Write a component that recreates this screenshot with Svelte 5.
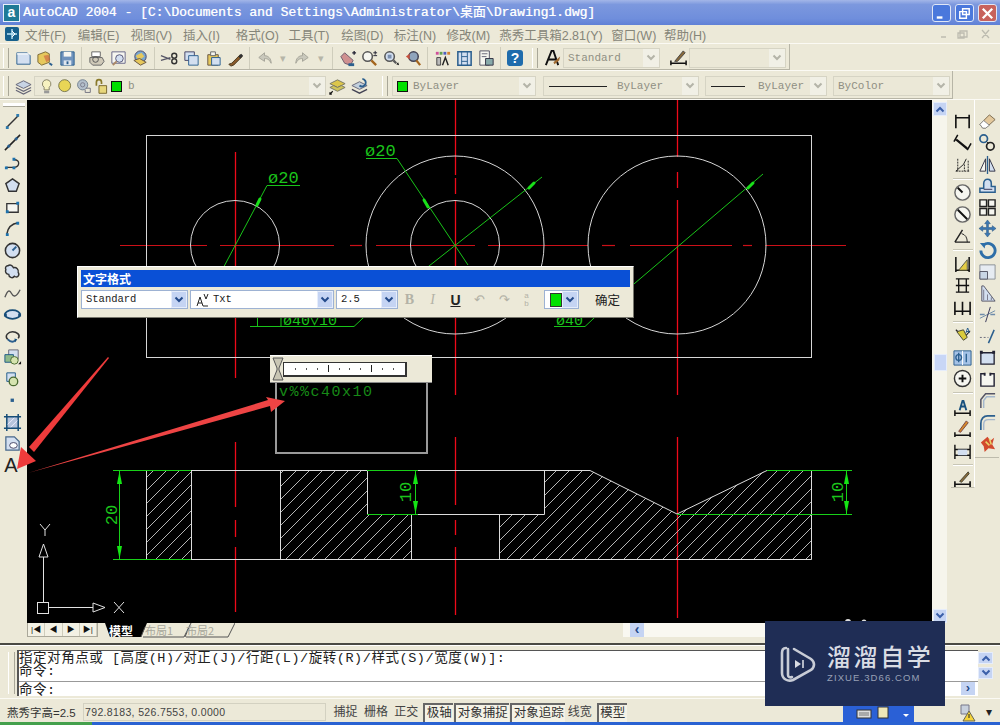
<script>
  const B = '#2b5f8e', L = '#d3dff0', Y = '#e6c85c', K = '#2a2a2a', R = '#c8503c', W = '#f6f6f0', G = '#8a8a80';
  const ic = {
    newdoc: `<path d="M3 4h11l3 3v9H3z" fill="${L}" stroke="${B}"/><path d="M3 4h14v2H3z" fill="#fff" opacity=".7"/>`,
    open: `<path d="M2 6l8-3 4 2v9l-8 3-4-3z" fill="${Y}" stroke="#7a6a3a"/><path d="M8 7l5-1 2 5-4 3z" fill="${R}" opacity=".55"/><path d="M14 15l3 2" stroke="${B}" stroke-width="2"/>`,
    save: `<path d="M3 3h14v14H3z" fill="#6f93bd" stroke="${B}"/><path d="M6 3h8v5H6z" fill="${W}"/><path d="M6 12h8v5H6z" fill="#dfe6ee"/><path d="M9 13h2v3H9z" fill="${B}"/>`,
    plot: `<path d="M5 3h9v5H5z" fill="#fff" stroke="#666"/><path d="M3 9h13l2 4-3 4H6l-3-3z" fill="#cfc9b8" stroke="#666"/><circle cx="9" cy="11" r="3" fill="none" stroke="#555"/>`,
    preview: `<path d="M3 3h14v12H3z" fill="${W}" stroke="#668"/><circle cx="11" cy="10" r="4" fill="${L}" stroke="#557"/><path d="M8 13l-4 4" stroke="#a86" stroke-width="2"/>`,
    publish: `<circle cx="10" cy="8" r="6" fill="#7aa7cf" stroke="#446"/><path d="M5 7l6-3 3 4-6 4z" fill="${Y}"/><path d="M3 12l7 5 6-3-7-4z" fill="${Y}" stroke="#654"/>`,
    cut: `<path d="M1 7l10 4M1 12l10-3" stroke="#556" stroke-width="1.4"/><circle cx="15" cy="7" r="2.6" fill="none" stroke="#333" stroke-width="1.5"/><circle cx="15" cy="13" r="2.6" fill="none" stroke="#333" stroke-width="1.5"/>`,
    copy: `<path d="M3 3h10v9H3z" fill="${L}" stroke="#446"/><path d="M7 7h10v10H7z" fill="${L}" stroke="${B}"/>`,
    paste: `<path d="M4 6h11v11H4z" rx="2" fill="${Y}" stroke="#654"/><path d="M7 3h5v4H7z" fill="${W}" stroke="#666"/><path d="M8 9h9v8H8z" fill="${L}" stroke="${B}"/>`,
    brush: `<path d="M3 16l3-1 9-9 2 2-9 9-3 1z" fill="#8a5a2a" stroke="#4a3a20"/><path d="M13 8l3-3 2 2-3 3z" fill="#333"/>`,
    undo: `<path d="M4 9l6-5v3c4 0 7 3 7 8-2-4-4-5-7-5v3z" fill="#c9c8bc" stroke="#a4a398"/>`,
    redo: `<path d="M16 9l-6-5v3C6 7 3 10 3 15c2-4 4-5 7-5v3z" fill="#c9c8bc" stroke="#a4a398"/>`,
    pan: `<path d="M3 8l4-4 9 8-3 5-6-2z" fill="#cf9090" stroke="#6a5a6a"/><path d="M15 4h4M17 2v4" stroke="#223" stroke-width="1.4"/><path d="M11 15h6v3h-6z" fill="${B}"/>`,
    zoomrt: `<circle cx="8" cy="8" r="5" fill="${W}" stroke="#555" stroke-width="1.6"/><path d="M12 12l5 5" stroke="#a4651e" stroke-width="2.4"/><path d="M14 4h4M16 2v4M14 7h4" stroke="#223"/>`,
    zoomwin: `<circle cx="8" cy="8" r="5" fill="${L}" stroke="#555" stroke-width="1.6"/><path d="M6 6h4v4H6z" fill="#7b8fae"/><path d="M12 12l3 3" stroke="#5a5a5a" stroke-width="2.4"/><path d="M15 16l3 1-1-3z" fill="#111"/>`,
    zoomprev: `<circle cx="10" cy="8" r="5" fill="#8fa4bc" stroke="#445" stroke-width="1.6"/><path d="M13 12l4 5" stroke="#a4651e" stroke-width="2.4"/><path d="M2 8l4-3v6z" fill="${R}"/>`,
    props: `<path d="M3 3h3v3H3z" fill="#d0509a"/><path d="M7 3h3v3H7z" fill="#60a050"/><path d="M11 3h3v3h-3z" fill="#5060c0"/><path d="M15 3h3v3h-3z" fill="#d08030"/><path d="M4 9h4v8H4z" fill="#bbb" stroke="#444"/><path d="M10 17l3-8 3 8" fill="none" stroke="#222" stroke-width="1.5"/>`,
    design: `<path d="M3 3h14v14H3z" fill="${L}" stroke="${B}" stroke-width="1.6"/><path d="M7 3v14M13 3v14M7 8h6M7 13h6" stroke="${B}"/>`,
    palette: `<path d="M3 2h10v15H3z" fill="${W}" stroke="#556"/><path d="M5 5h6M5 8h5" stroke="#667"/><path d="M9 10h8v7H9z" fill="#8aa" stroke="#334"/>`,
    help: `<path d="M2 3h16v15H2z" rx="3" fill="#2f6ca8" stroke="#1e4a78"/>`,
    txt: `<path d="M3 17L9 2h2l5 15M5 11h9" fill="none" stroke="#111" stroke-width="2"/><path d="M11 14l7-6-1 4-5 4z" fill="#a06a30"/>`,
    dimst: `<path d="M2 12v5M18 12v5M2 15h16" stroke="#111" stroke-width="1.6"/><path d="M6 13L15 2l2 2-8 9z" fill="#8a6a3a" stroke="#444"/>`,
    layers: `<path d="M10 4l8 4-8 4-8-4z" fill="#c8d4e4" stroke="#667"/><path d="M2 11l8 4 8-4M2 14l8 4 8-4" fill="none" stroke="#667" stroke-width="1.3"/>`,
    bulb: `<path d="M9 2a5 5 0 0 1 3 9v3H6v-3a5 5 0 0 1 3-9z" fill="#f7f2c0" stroke="#77745a"/><path d="M6 15h6v3H6z" fill="#999"/>`,
    sun: `<circle cx="9" cy="9" r="7" fill="#e8d556" stroke="#6a6a40"/>`,
    freeze: `<circle cx="9" cy="8" r="6" fill="#b3bfcb" stroke="#6a7a8a"/><circle cx="9" cy="8" r="2.5" fill="none" stroke="#778"/><path d="M13 12h5v5h-6v-3" fill="none" stroke="#667"/>`,
    lock: `<path d="M4 9V5a3 3 0 0 1 6 0v2" fill="none" stroke="#8a7a2a" stroke-width="2"/><path d="M7 9h9v9H7z" fill="#e7d77c" stroke="#6a5a20"/>`,
    layer2: `<path d="M10 3l8 4-8 4-8-4z" fill="#dcc64a" stroke="#776"/><path d="M2 11l8 4 8-4-4-2-4 2-4-2z" fill="#cfc45a" stroke="#776"/><path d="M2 18l3-3M2 16v2h2" stroke="#111" stroke-width="1.2" fill="none"/>`,
    layer3: `<path d="M10 5l8 4-8 4-8-4z" fill="#c3d0dd" stroke="#667"/><path d="M2 13l8 4 8-4" fill="none" stroke="#445" stroke-width="1.5"/><path d="M13 2a4 4 0 1 1-3 7" fill="none" stroke="${B}" stroke-width="2"/>`,
    line: `<path d="M4 16L16 4" stroke="#333" stroke-width="1.5"/><path d="M3 15h3v3H3zM14 2h3v3h-3z" fill="#2b7ab0"/>`,
    xline: `<path d="M2 18L18 2" stroke="#222" stroke-width="1.6"/><path d="M5 13l2 2M13 5l2 2" stroke="${B}" stroke-width="3"/>`,
    pline: `<path d="M3 13h9M12 13c6-1 6-8 0-8" fill="none" stroke="#333" stroke-width="1.4"/><path d="M2 12h3v3H2zM10 12h3v3h-3zM10 3h3v3h-3z" fill="#1d72ad"/>`,
    poly: `<path d="M10 3l7 5-3 8H6L3 8z" fill="${L}" stroke="#333" stroke-width="1.5"/>`,
    rect: `<path d="M4 6h12v9H4z" fill="${W}" stroke="#333" stroke-width="1.4"/><path d="M3 13h3v3H3zM14 4h3v3h-3z" fill="#1d72ad"/>`,
    arc: `<path d="M4 16C5 9 9 5 16 4" fill="none" stroke="#333" stroke-width="1.6"/><path d="M3 15h3v3H3zM14 3h3v3h-3z" fill="#1d72ad"/>`,
    circle: `<circle cx="10" cy="10" r="7.5" fill="${L}" stroke="#333" stroke-width="1.6"/><path d="M10 10l4-4" stroke="${B}" stroke-width="2"/>`,
    cloud: `<path d="M5 4c3-2 5 0 6 2 3-1 6 2 5 5 2 3-1 6-4 4-2 3-6 1-6-2-3 0-4-3-3-5-1-2 0-4 2-4z" fill="${L}" stroke="#333" stroke-width="1.5"/>`,
    spline: `<path d="M2 14c3-8 5-8 7-4s5 4 9-4" fill="none" stroke="#555" stroke-width="1.4"/>`,
    ellipse: `<ellipse cx="10" cy="10" rx="8" ry="4.5" fill="${L}" stroke="#174d78" stroke-width="1.8"/><path d="M1 9h3v3H1zM16 9h3v3h-3z" fill="#174d78"/>`,
    earc: `<path d="M5 13C1 9 6 5 10 5s9 3 6 7" fill="none" stroke="#333" stroke-width="1.6"/><path d="M5 13c3 3 6 3 8 1" fill="none" stroke="${B}" stroke-width="2"/><path d="M12 12l3 1-2 3z" fill="#174d78"/>`,
    insert: `<path d="M6 2h10v10H6z" fill="${L}" stroke="#667"/><path d="M2 7h9v8H2z" fill="#8fb98a" stroke="#1d5a88"/><circle cx="12" cy="13" r="4" fill="#d6e4b0" stroke="#4a6a30"/><path d="M16 17l3-3v3z" fill="#111"/>`,
    block: `<path d="M4 3h9v9H4z" fill="${L}" stroke="#1d5a88"/><circle cx="11" cy="12" r="4.5" fill="#d6e4b0" stroke="#4a6a30" stroke-width="1.4"/>`,
    point: `<rect x="8" y="8" width="3.5" height="3.5" fill="${B}"/>`,
    hatch: `<path d="M4 4h12v12H4z" fill="#b7c4dc"/><path d="M4 1v18M16 1v18M1 4h18M1 16h18" stroke="#174d78" stroke-width="1.6"/><path d="M5 12l7-7M8 15l7-7" stroke="#eef" />`,
    region: `<path d="M3 3h9l5 5v9H3z" fill="${L}" stroke="#48688a" stroke-width="1.3"/><ellipse cx="11" cy="12" rx="4" ry="3" fill="#fff" stroke="#446"/>`,
    dlin: `<path d="M3 3v14M17 3v14M3 6h14" stroke="#111" stroke-width="1.7"/>`,
    dali: `<path d="M3 7l12 10M5 2L1 9M19 11l-4 7M4 7l11 9" stroke="#111" stroke-width="1.6"/>`,
    dord: `<path d="M3 17h14M5 4v13M12 10v7M16 6v11" stroke="#222" stroke-width="1" stroke-dasharray="2 1"/><path d="M3 17l8-7 3-6" fill="none" stroke="#222"/>`,
    drad: `<circle cx="10" cy="10" r="8" fill="${W}" stroke="#666" stroke-width="1.5"/><path d="M10 10L5 5" stroke="#111" stroke-width="2"/>`,
    ddia: `<circle cx="10" cy="10" r="8" fill="${W}" stroke="#666" stroke-width="1.5"/><path d="M5 5l10 10" stroke="#111" stroke-width="2"/>`,
    dang: `<path d="M2 17h16M2 17L10 4" stroke="#222" stroke-width="1.5"/><path d="M9 8c4 1 6 4 6 9" fill="none" stroke="#222"/>`,
    dqk: `<path d="M3 2v16M17 2v16M3 16h14" stroke="#111" stroke-width="1.6"/><path d="M6 16l9-11v11z" fill="#e4cc44" stroke="#554"/>`,
    dbase: `<path d="M3 3h14M3 10h14M3 17h14M6 3v14M14 3v14" stroke="#111" stroke-width="1.4"/>`,
    dcont: `<path d="M2 4v14M10 4v14M18 4v14M2 14h16" stroke="#111" stroke-width="1.7"/>`,
    dlead: `<path d="M3 4l9 8 6-7" fill="none" stroke="#222" stroke-width="1.2"/><path d="M4 6l7-2 4 8-4 3z" fill="#d9cb3c" stroke="#443"/><text x="13" y="7" font-size="7" font-weight="700" fill="${B}" font-family="Liberation Sans">A</text>`,
    dtol: `<path d="M1 3h18v15H1z" fill="#a4c2e6" stroke="${B}"/><path d="M10 3v15" stroke="#fff"/><circle cx="6" cy="10" r="3" fill="none" stroke="${B}" stroke-width="1.4"/><path d="M6 5v10M14 6v9" stroke="${B}" stroke-width="1.4"/>`,
    dcen: `<circle cx="10" cy="10" r="8.5" fill="${W}" stroke="#333" stroke-width="1.5"/><path d="M10 6v8M6 10h8" stroke="#111" stroke-width="2"/>`,
    dedit: `<path d="M2 13v6M18 13v6M2 16h16" stroke="#111" stroke-width="1.6"/><path d="M7 13l3-10h1l3 10M8 9h5" stroke="#18507e" fill="none" stroke-width="2"/>`,
    dtedit: `<path d="M2 14v5M18 14v5M2 17h16" stroke="#111" stroke-width="1.6"/><path d="M6 13L14 2l2 2-8 10z" fill="#d68a2a" stroke="#744"/>`,
    dupd: `<path d="M2 4v15M18 4v15M2 9h16M2 15h16" stroke="#111" stroke-width="1.5"/><path d="M5 9h10v6H5z" fill="${L}"/>`,
    dstyle: `<path d="M2 13v6M18 13v6M2 16h16" stroke="#111" stroke-width="1.7"/><path d="M7 13L16 3l1 2-8 9z" fill="#8a6a3a" stroke="#443"/>`,
    erase: `<path d="M2 13l10-10 6 5-10 9H5z" fill="#e3c89c" stroke="#7a6a50"/><path d="M2 13l4-4 6 5-4 3H5z" fill="#fff" stroke="#888"/>`,
    copyo: `<circle cx="6" cy="6" r="4" fill="none" stroke="${B}" stroke-width="1.8"/><circle cx="13" cy="14" r="4" fill="none" stroke="#222" stroke-width="1.8"/><path d="M9 9l2 2" stroke="#222"/>`,
    mirror: `<path d="M2 17L8 4v13z" fill="${W}" stroke="#334"/><path d="M18 17L12 4v13z" fill="${L}" stroke="#334"/><path d="M10 1v19" stroke="${B}" stroke-width="1.4"/>`,
    offset: `<path d="M2 17v-4h4V8c0-6 8-6 8 0v3h4v6z" fill="${L}" stroke="${B}" stroke-width="1.6"/><path d="M6 14h9" stroke="#335"/>`,
    array: `<path d="M2 2h7v7H2zM11 2h7v7h-7zM2 11h7v7H2zM11 11h7v7h-7z" fill="${W}" stroke="#222" stroke-width="1.5"/>`,
    move: `<path d="M10 1l3 4h-2v4h4V7l4 3-4 3v-2h-4v4h2l-3 4-3-4h2v-4H5v2l-4-3 4-3v2h4V5H7z" fill="#3c78b4" stroke="#1d4a78" stroke-width=".5"/>`,
    rotate: `<path d="M6 4a7.5 7.5 0 1 1-3 6" fill="none" stroke="#2e6ea8" stroke-width="3"/><path d="M2 2l6 0-1 6z" fill="#2e6ea8"/>`,
    scale: `<path d="M2 3h16v15H2z" fill="#e6ebf2" stroke="#8a8f96"/><path d="M2 10h8v8H2z" fill="#c9d6e6" stroke="#556"/>`,
    stretch: `<path d="M4 2v16h14L6 2z" fill="${L}" stroke="#556"/><path d="M6 6v11M10 11v6M14 14v3" stroke="#778"/>`,
    trim: `<path d="M2 14l16-8" stroke="#6e8caa"/><path d="M2 10h5M13 10h5" stroke="#6e8caa" stroke-width="1.5"/><path d="M13 2L8 18" stroke="#335" stroke-width="1"/>`,
    extend: `<path d="M2 11h9" stroke="#667" stroke-dasharray="2 2"/><path d="M11 17L17 3" stroke="${B}" stroke-width="1.6"/>`,
    brk: `<path d="M3 5h14v12H3z" fill="${L}" stroke="#223" stroke-width="1.4"/><path d="M2 3h3v3H2zM15 3h3v3h-3z" fill="#223"/>`,
    brk2: `<path d="M7 4H3v13h14V4h-4" fill="${W}" stroke="#223" stroke-width="1.5"/><path d="M6 3h2v3H6zM12 3h2v3h-2z" fill="#223"/>`,
    cham: `<path d="M18 3H8L3 9v9" fill="none" stroke="#556" stroke-width="1.6"/><path d="M18 6H9L6 10v8" fill="none" stroke="#a4b7cc" stroke-width="1.5"/>`,
    fillet: `<path d="M18 3H10C6 3 3 6 3 11v7" fill="none" stroke="${B}" stroke-width="1.8"/><path d="M18 7h-7c-3 0-5 2-5 5v6" fill="none" stroke="#a4b7cc" stroke-width="1.5"/>`,
    explode: `<path d="M3 9l7-6 3 4 4-3-2 7 3 5-7-1-4 4-1-6z" fill="#d24a2e"/><path d="M8 8l4 4M12 5l2 6" stroke="#e9d36a" stroke-width="1.6"/>`
  };

  const row1a = ['newdoc','open','save','|','plot','preview','publish','|','cut','copy','paste','brush','|','undo','v','redo','v','|','pan','zoomrt','zoomwin','zoomprev','|','props','design','palette','|'];
  const left = ['line','xline','pline','poly','rect','arc','circle','cloud','spline','ellipse','earc','insert','block','point','hatch','region'];
  const dims = [['dlin','dali','dord'],['drad','ddia','dang'],['dqk','dbase','dcont'],['dlead','dtol','dcen'],['dedit','dtedit','dupd'],['dstyle']];
  const modify = ['erase','copyo','mirror','offset','array','move','rotate','scale','stretch','trim','extend','brk','brk2','cham','fillet','explode'];
  const menus = ['文件(F)','编辑(E)','视图(V)','插入(I)','格式(O)','工具(T)','绘图(D)','标注(N)','修改(M)','燕秀工具箱2.81(Y)','窗口(W)','帮助(H)'];
  const modes = [['捕捉',0],['栅格',0],['正交',0],['极轴',1],['对象捕捉',1],['对象追踪',1],['线宽',0],['模型',1]];

  const redH = [[120,207],[220,334],[350,362],[376,475],[488,588],[602,615],[630,732],[743,752],[765,846]];
  const redV = [
    [235,152,378],[235,442,507],[235,520,537],[235,547,612],
    [455,100,175],[455,178,194],[455,200,395],[455,437,505],[455,520,535],[455,547,615],
    [677,100,157],[677,172,188],[677,200,395],[677,437,618]
  ];
  const ticks = [0,1,2,3,4,5,6,7,8,9];
</script>

{#snippet chev(color)}
  <svg class="chev" viewBox="0 0 10 8"><path d="M1.5 1.5L5 5l3.5-3.5" fill="none" stroke={color} stroke-width="2"/></svg>
{/snippet}

{#snippet icon(name)}
  <span class="btn"><svg class="ico" viewBox="0 0 20 20">{@html ic[name]}</svg></span>
{/snippet}

<div class="app">
  <header class="title">
    <span class="appicon">a</span>
    <span class="title-text">AutoCAD 2004 - [C:\Documents and Settings\Administrator\桌面\Drawing1.dwg]</span>
    <span class="winbtns">
      <span class="wb"><svg viewBox="0 0 18 18"><path d="M4 12h6v2.5H4z" fill="#fff"/></svg></span>
      <span class="wb"><svg viewBox="0 0 18 18"><path d="M7 4h7v6H7zM4 7h7v7H4z" fill="none" stroke="#fff" stroke-width="1.5"/></svg></span>
      <span class="wb close"><svg viewBox="0 0 18 18"><path d="M4 4l10 10M14 4L4 14" stroke="#fff" stroke-width="2.4"/></svg></span>
    </span>
  </header>

  <nav class="menubar">
    <svg class="docicon" viewBox="0 0 16 16"><rect x="1" y="1" width="14" height="14" rx="2" fill="#16608c"/><path d="M8 3v10M3 8h10" stroke="#bfe6f8" stroke-width="1.4"/><path d="M8 5l3 3-3 3" fill="none" stroke="#fff"/></svg>
    {#each menus as m, i}<span class="menu" class:wide={i === 9}>{m}</span>{/each}
    <span class="mdi">
      <svg viewBox="0 0 60 12"><path d="M3 9h5M22 3h7v6h-7zM20 5h6v5h-6zM44 2l7 8M51 2l-7 8" fill="none" stroke="#bdbcb0" stroke-width="1.3"/></svg>
    </span>
  </nav>

  <div class="row row1">
    <div class="bar bar-a">
      <span class="grip"></span>
      {#each row1a as it}
        {#if it === '|'}<span class="sep"></span>
        {:else if it === 'v'}<span class="drop">▾</span>
        {:else}{@render icon(it)}{/if}
      {/each}
      <span class="btn help">?</span>
      <span class="grip g2"></span>
      {@render icon('txt')}
      <span class="combo flat w96"><span class="ctext">Standard</span><span class="carrow">{@render chev('#b4b4a8')}</span></span>
      <span class="gap7"></span>
      {@render icon('dimst')}
      <span class="combo flat w97"><span class="ctext"></span><span class="carrow">{@render chev('#b4b4a8')}</span></span>
    </div>
  </div>

  <div class="row row2">
    <div class="bar bar-b">
      <span class="grip"></span>
      {@render icon('layers')}
      <span class="combo flat w292">
        <span class="ctext layer">
          <svg class="mini" viewBox="0 0 20 20">{@html ic.bulb}</svg>
          <svg class="mini" viewBox="0 0 20 20">{@html ic.sun}</svg>
          <svg class="mini" viewBox="0 0 20 20">{@html ic.freeze}</svg>
          <svg class="mini" viewBox="0 0 20 20">{@html ic.lock}</svg>
          <i class="swatch"></i><span class="layername">b</span>
        </span>
        <span class="carrow">{@render chev('#b4b4a8')}</span>
      </span>
      {@render icon('layer2')}
      {@render icon('layer3')}
      <span class="grip g3"></span>
      <span class="combo flat w144"><span class="ctext"><i class="swatch"></i>ByLayer</span><span class="carrow">{@render chev('#b4b4a8')}</span></span>
      <span class="combo flat w156 ml7"><span class="ctext"><i class="lt long"></i>ByLayer</span><span class="carrow">{@render chev('#b4b4a8')}</span></span>
      <span class="combo flat w122 ml6"><span class="ctext"><i class="lt"></i>ByLayer</span><span class="carrow">{@render chev('#b4b4a8')}</span></span>
      <span class="combo flat w117 ml6"><span class="ctext">ByColor</span><span class="carrow">{@render chev('#b4b4a8')}</span></span>
    </div>
  </div>

  <main class="main">
    <aside class="lefttools">
      <span class="hgrip"></span>
      {#each left as n}{@render icon(n)}{/each}
      <span class="btn letter">A</span>
    </aside>

    <div class="center">
      <div class="canvasrow">
        <svg class="canvas" viewBox="27 100 905 523" width="905" height="523">
          <defs>
            <pattern id="hatch" patternUnits="userSpaceOnUse" width="13" height="13">
              <path d="M-1 14L14 -1M-1 1L1 -1M12 14L14 12" stroke="#b4b4b4" stroke-width="1"/>
            </pattern>
          </defs>
          <rect x="27" y="100" width="905" height="523" fill="#000"/>

          {#each redH as s}<line x1={s[0]} x2={s[1]} y1="245.5" y2="245.5" stroke="#cc1018" stroke-width="1.2"/>{/each}
          {#each redV as s}<line x1={s[0] + .5} x2={s[0] + .5} y1={s[1]} y2={s[2]} stroke="#ee0a1a" stroke-width="1.3"/>{/each}

          <g fill="none" stroke="#d6d6d6" stroke-width="1">
            <rect x="146.5" y="135.5" width="665" height="222"/>
            <circle cx="235" cy="245" r="44.5"/>
            <circle cx="455" cy="245" r="89"/>
            <circle cx="455" cy="245" r="44.5"/>
            <circle cx="677" cy="245" r="89"/>
          </g>

          <g stroke="#19c419" stroke-width="1" fill="none">
            <path d="M300 185.5H267L211 291"/>
            <path d="M366 158.5H397L468 265"/>
            <path d="M363 318L542 177"/>
            <path d="M594 318L763 174"/>
            <path d="M250 326.5H354L363 318"/>
            <path d="M554 326.5H585L594 318"/>
            <path d="M257.5 318V326M281 318V326"/>
          </g>
          <g stroke="#19e019" stroke-width="3" stroke-linecap="round">
            <line x1="260" y1="199" x2="257" y2="205"/>
            <line x1="424" y1="200" x2="428" y2="207"/>
            <line x1="534" y1="183" x2="529" y2="188"/>
            <line x1="753" y1="183" x2="748" y2="188"/>
          </g>
          <g class="dim">
            <text x="268" y="183">ø20</text>
            <text x="365" y="156">ø20</text>
            <text x="283" y="325" class="cut">ø40▽10</text>
            <text x="556" y="325" class="cut">ø40</text>
          </g>

          <!-- section view -->
          <rect x="146" y="470" width="45" height="89" fill="url(#hatch)"/>
          <polygon points="280,470 367,470 367,514 411,514 411,559 280,559" fill="url(#hatch)"/>
          <polygon points="544,470 590,470 677,514 767,470 811,470 811,559 499,559 499,514 544,514" fill="url(#hatch)"/>
          <g fill="none" stroke="#dcdcdc" stroke-width="1">
            <path d="M191 470.5H590L677 514L767 470.5"/>
            <path d="M191 559.5H499"/>
            <path d="M146.5 470V559M191.5 470V559M280.5 470V559M367.5 470V514.5H544.5V470M411.5 514V559M499.5 514V559"/>
            <path d="M499 559.5H811.5V470"/>
          </g>
          <g stroke="#18d018" stroke-width="1" fill="none">
            <path d="M113 470.5H191M113 559.5H191M119.5 471V559"/>
            <path d="M367 470.5H418M367 514.5H418M415.5 471V514"/>
            <path d="M767 470.5H852M677 514.5H852M846.5 471V514"/>
          </g>
          <g fill="#14e614">
            <polygon points="119.5,471 117,484 122,484"/><polygon points="119.5,559 117,546 122,546"/>
            <polygon points="415.5,471 413,484 418,484"/><polygon points="415.5,514 413,501 418,501"/>
            <polygon points="846.5,471 844,484 849,484"/><polygon points="846.5,514 844,501 849,501"/>
          </g>
          <g class="dim">
            <text transform="translate(117 515) rotate(-90)" text-anchor="middle">20</text>
            <text transform="translate(411 492) rotate(-90)" text-anchor="middle">10</text>
            <text transform="translate(843 492) rotate(-90)" text-anchor="middle">10</text>
          </g>

          <!-- ucs icon -->
          <g fill="none" stroke="#e2e2e2" stroke-width="1">
            <rect x="37.5" y="602.5" width="11" height="11"/>
            <path d="M48 607.5H93M43.5 602V557"/>
            <path d="M93 603L105 607.5L93 612zM43.5 544L39 557H48z"/>
            <path d="M114 602L124 613M124 602L114 613M40 524L45 530L50 524M45 530V536"/>
          </g>
          <circle cx="848" cy="622" r="3" fill="#dedede"/><circle cx="864" cy="622" r="2.5" fill="#dedede"/>
        </svg>

        <div class="vscroll">
          <span class="sbtn">{@render chev('#3a5fa8')}</span>
          <span class="vthumb"></span>
          <span class="sbtn">{@render chev('#3a5fa8')}</span>
        </div>
      </div>

      <div class="tabrow">
        <div class="navs">
          <span class="nav">|◀</span><span class="nav">◀</span><span class="nav">▶</span><span class="nav">▶|</span>
        </div>
        <div class="tabs">
          <svg class="tabshapes" viewBox="0 0 130 15" width="130" height="15">
            <path d="M0 0H36L42 0L36 14H5z" fill="#000"/>
            <path d="M38 14H79L86 0" fill="none" stroke="#555"/>
            <path d="M81 14H123L130 0" fill="none" stroke="#555"/>
            <path d="M36 14L40 4M80 14L84 4" stroke="#555"/>
          </svg>
          <span class="tab on">模型</span><span class="tab">布局1</span><span class="tab">布局2</span>
        </div>
        <div class="hscroll"><span class="harrow">‹</span></div>
      </div>
    </div>

    <div class="righttools">
      <div class="dimcol">
        <span class="hgrip"></span>
        {#each dims as grp, i}
          {#if i > 0}<span class="hsep"></span>{/if}
          {#each grp as n}{@render icon(n)}{/each}
        {/each}
      </div>
      <div class="modcol">
        <span class="hgrip"></span>
        {#each modify as n}{@render icon(n)}{/each}
      </div>
    </div>
  </main>

  <section class="cmd">
    <span class="vgrip"></span>
    <div class="cmdbox">
      <div class="hist">指定对角点或 [高度(H)/对正(J)/行距(L)/旋转(R)/样式(S)/宽度(W)]:<br/>命令:</div>
      <div class="input">命令:</div>
      <span class="cright">›</span>
    </div>
    <div class="cmdscroll">
      <span class="csb">{@render chev('#3a5fa8')}</span>
      <span class="csb">{@render chev('#3a5fa8')}</span>
    </div>
  </section>

  <footer class="status">
    <span class="tip">燕秀字高=2.5</span>
    <span class="coords">792.8183, 526.7553, 0.0000</span>
    <span class="modes">
      {#each modes as m}<span class="mode" class:on={m[1]}>{m[0]}</span>{/each}
    </span>
    <span class="tray">
      <svg viewBox="0 0 70 16" width="70" height="16"><rect x="14" y="4" width="14" height="8" fill="#ddd" stroke="#333"/><path d="M16 7h10M16 9h10" stroke="#777"/><rect x="35" y="1" width="10" height="11" fill="#eee7b8" stroke="#333"/><path d="M60 8h6l-3 3z" fill="#fff"/></svg>
    </span>
    <span class="warn">
      <svg viewBox="0 0 20 20" width="20" height="20"><path d="M3 3h8v9H3z" fill="#c8d0dc" stroke="#778"/><path d="M11 9l6 10H5z" fill="#f5d33a" stroke="#665"/><path d="M11 12v4" stroke="#222"/></svg>
    </span>
    <span class="caret">▾</span>
  </footer>

  <div class="taskbar"><span class="start"></span></div>

  <!-- floating stuff over the drawing -->
  <div class="textwin">
    <div class="tw-title">文字格式</div>
    <div class="tw-body">
      <span class="combo white tw1"><span class="ctext">Standard</span><span class="carrow blue">{@render chev('#234a8a')}</span></span>
      <span class="combo white tw2"><span class="ctext"><svg class="fonticon" viewBox="0 0 14 14"><path d="M2 13l3-9 3 9M3 10h4M9 1l2 5 2-5M8 13h5" fill="none" stroke="#222"/></svg> Txt</span><span class="carrow blue">{@render chev('#234a8a')}</span></span>
      <span class="combo white tw3"><span class="ctext">2.5</span><span class="carrow blue">{@render chev('#234a8a')}</span></span>
      <span class="fmt bold">B</span>
      <span class="fmt ital">I</span>
      <span class="fmt under">U</span>
      <span class="fmt small">↶</span>
      <span class="fmt small">↷</span>
      <span class="fmt frac">a<br/>b</span>
      <span class="combo white tw4"><span class="ctext"><i class="bigswatch"></i></span><span class="carrow blue">{@render chev('#234a8a')}</span></span>
      <span class="ok">确定</span>
    </div>
  </div>

  <div class="rulerwin">
    <div class="rulerbar">
      <svg class="hglass" viewBox="0 0 12 24"><path d="M1 1h10L7 11v2l4 10H1l4-10v-2z" fill="#c9c6b4" stroke="#555"/></svg>
      <div class="ruler">
        {#each ticks as t}<i class:big={t === 3 || t === 7}></i>{/each}
      </div>
    </div>
    <div class="editbox">v%%c40x10</div>
  </div>

  <svg class="arrows" viewBox="0 0 1000 725" width="1000" height="725">
    <polygon points="108,357 109,358 34,452 29,447" fill="#ee3b3b"/>
    <polygon points="21,447 36,461 17,469" fill="#ee3b3b"/>
    <polygon points="28,473 268,400 266,397 285,401 271,412 270,406" fill="#ee4444"/>
  </svg>

  <div class="logo">
    <svg class="logomark" viewBox="0 0 36 40" width="36" height="40">
      <path d="M6 4c-3 0-4 2-4 5v20c0 6 6 9 11 7l18-10c4-3 4-8 0-11L14 5" fill="none" stroke="#c8ccd6" stroke-width="2.6" stroke-linecap="round"/>
      <path d="M8 5v26c0 2 2 3 4 2" fill="none" stroke="#c8ccd6" stroke-width="2.6" stroke-linecap="round"/>
      <path d="M15 16l6 4-6 4z" fill="#d8dbe3"/><path d="M23 16v8" stroke="#d8dbe3" stroke-width="1.6"/>
    </svg>
    <div class="logotext">
      <div class="cn">溜溜自学</div>
      <div class="en">ZIXUE.3D66.COM</div>
    </div>
  </div>
</div>

<style>
  :global(body) { margin: 0; background: #ece9d8; }
  .app {
    position: relative;
    width: 1000px;
    height: 725px;
    overflow: hidden;
    background: #ece9d8;
    display: flex;
    flex-direction: column;
    font-family: "Liberation Sans", "Noto Sans CJK SC", sans-serif;
  }
  .title {
    height: 25px;
    flex: none;
    display: flex;
    align-items: center;
    background: linear-gradient(#a3b6e8, #7c98de 18%, #6f8edc 75%, #5f80d6);
    padding: 0 3px;
    box-sizing: border-box;
  }
  .appicon {
    width: 15px; height: 16px;
    background: #1f7a96;
    border: 1px solid #e8f0fa;
    color: #fff;
    font: bold 14px/14px "Liberation Sans", sans-serif;
    text-align: center;
  }
  .title-text {
    margin-left: 3px;
    color: #fff;
    font: 13px/1 "Liberation Mono", "Noto Sans CJK SC", monospace;
    text-shadow: .5px 0 0 #ffffffb0;
    white-space: nowrap;
  }
  .winbtns { margin-left: auto; display: flex; gap: 4px; margin-right: 0; }
  .wb { width: 19px; height: 18px; border-radius: 3px; background: #4a78dc; border: 1px solid #dfe6f6; box-sizing: border-box; }
  .wb svg { display: block; }
  .wb.close { background: #c8625c; }

  .menubar {
    height: 19px;
    flex: none;
    display: flex;
    align-items: center;
    padding-left: 4px;
    box-sizing: border-box;
    border-bottom: 1px solid #fbfaf4;
  }
  .docicon { width: 16px; height: 16px; margin-right: 5px; flex: none; }
  .menu {
    color: #858579;
    font-size: 12.5px;
    white-space: nowrap;
    flex: 0 0 52.7px;
  }
  .menu.wide { flex-basis: 112px; }
  .mdi { margin-left: auto; margin-right: 2px; }
  .mdi svg { display: block; width: 60px; height: 12px; }

  .row { flex: none; display: flex; border-bottom: 1px solid #fbfaf4; box-sizing: border-box; }
  .row1 { height: 27px; }
  .row2 { height: 29px; }
  .bar {
    display: flex;
    align-items: center;
    box-sizing: border-box;
    border-bottom: 1px solid #b7b5a6;
    border-right: 1px solid #b7b5a6;
    height: 100%;
    padding-top: 3px;
  }
  .bar-a { width: 790px; }
  .bar-b { width: 953px; }
  .grip {
    flex: none;
    width: 4px;
    height: 20px;
    margin: 0 3px 0 3px;
    border-left: 1px solid #fff;
    border-right: 1px solid #a9a798;
    box-shadow: 2px 0 0 #ece9d8;
  }
  .g2 { margin-left: 6px; margin-right: 3px; }
  .g3 { margin: 0 4px 0 12px; }
  .sep { flex: none; width: 1px; height: 22px; background: #cfcdbc; margin: 0 3px; }
  .drop { flex: none; width: 10px; color: #b6b5a8; font-size: 11px; text-align: center; margin: 0 3px; }
  .gap7 { width: 7px; flex: none; }
  .btn {
    flex: none;
    width: 22px;
    height: 21.5px;
    display: flex;
    align-items: center;
    justify-content: center;
  }
  .ico { width: 19px; height: 19px; display: block; filter: blur(.35px); }
  .mini { width: 17px; height: 17px; flex: none; filter: blur(.3px); }
  .help {
    width: 16px; height: 16px; margin: 0 3px;
    background: #1f6cac; color: #fff; border-radius: 3px;
    font: bold 14px/16px "Liberation Sans", sans-serif;
  }
  .combo {
    flex: none;
    display: flex;
    align-items: stretch;
    box-sizing: border-box;
    overflow: hidden;
  }
  .flat {
    height: 20px;
    border: 1px solid #d6d4c4;
    background: #ebe8d7;
    color: #8f8f83;
    font: 11px/18px "Liberation Mono", monospace;
  }
  .w96 { width: 97px; } .w97 { width: 97px; }
  .w292 { width: 292px; } .w144 { width: 144px; }
  .w156 { width: 156px; } .w122 { width: 122px; } .w117 { width: 117px; }
  .ml7 { margin-left: 7px; } .ml6 { margin-left: 6px; }
  .ctext { flex: 1; padding-left: 4px; display: flex; align-items: center; gap: 5px; white-space: nowrap; overflow: hidden; }
  .layer { gap: 1px; }
  .layername { margin-left: 5px; }
  .carrow {
    flex: none; width: 16px;
    background: #f1f0e6;
    display: flex; align-items: center; justify-content: center;
  }
  .carrow.blue { background: #c5d4f3; border: 1px solid #e6edfb; box-sizing: border-box; }
  .chev { width: 10px; height: 8px; display: block; }
  .swatch { display: inline-block; width: 9px; height: 9px; background: #00e000; border: 1px solid #111; flex: none; }
  .lt { display: inline-block; width: 34px; height: 1px; background: #222; margin-right: 8px; flex: none; margin-left: 1px; }
  .lt.long { width: 58px; margin-right: 5px; }

  .main { height: 543px; flex: none; display: flex; }
  .lefttools { width: 27px; flex: none; display: flex; flex-direction: column; padding-left: 1px; box-sizing: border-box; }
  .hgrip { flex: none; display: block; height: 3px; margin: 3px 2px 3.5px; background: #fff; border-bottom: 1px solid #a9a798; }
  .letter { color: #222; font: 20px/1 "Liberation Sans", sans-serif; height: 21.5px; margin-left: -1px; }
  .center { width: 920px; flex: none; display: flex; flex-direction: column; }
  .canvasrow { display: flex; height: 523px; }
  .canvas { display: block; flex: none; }
  .dim { fill: #1bc41b; font: 17px "Liberation Mono", monospace; }
  .cut { font-size: 15px; }

  .vscroll {
    width: 15px;
    flex: none;
    background: #f6f5ec;
    position: relative;
    display: flex;
    flex-direction: column;
    justify-content: space-between;
    align-items: flex-end;
    padding-top: 2px;
    box-sizing: border-box;
  }
  .sbtn { width: 14px; height: 14px; background: #c5d4f3; border: 1px solid #e6edfb; box-sizing: border-box; display: flex; align-items: center; justify-content: center; }
  .sbtn:first-child .chev { transform: rotate(180deg); }
  .vthumb { width: 13px; height: 17px; background: #c8d6f6; border: 1px solid #e6edfb; box-sizing: border-box; }

  .tabrow { display: flex; height: 20px; align-items: flex-start; }
  .navs { display: flex; width: 71px; height: 14px; border: 1px solid #aaa89a; border-top: 0; box-sizing: border-box; flex: none; background: #f3f1e4; }
  .nav { flex: 1; font-size: 8px; line-height: 13px; text-align: center; color: #111; border-right: 1px solid #cfcdbc; }
  .tabs { flex: none; width: 130px; height: 20px; margin-left: 7px; position: relative; display: flex; }
  .tabshapes { position: absolute; left: 0; top: 0; display: block; }
  .tab { position: relative; flex: none; width: 41px; font: 11px/15px "Noto Sans CJK SC", sans-serif; color: #a8a79b; white-space: nowrap; padding-left: 1px; box-sizing: border-box; }
  .tab.on { width: 39px; padding-left: 4px; color: #fff; font-size: 12px; font-weight: 700; }
  .hscroll { flex: 1; margin: 0 2px 0 388px; height: 14px; background: #f9f8f1; display: flex; padding-left: 7px; }
  .harrow { width: 14px; height: 14px; background: #c5d4f3; color: #234a8a; font: bold 14px/12px "Liberation Sans", sans-serif; text-align: center; }

  .righttools { flex: none; display: flex; margin-left: 4px; align-items: flex-start; }
  .dimcol { width: 24px; height: 388px; display: flex; flex-direction: column; align-items: center; border-right: 1px solid #fff; border-bottom: 1px solid #bdbbac; box-sizing: border-box; }
  .modcol { width: 24px; height: 358px; display: flex; flex-direction: column; align-items: center; border-bottom: 1px solid #bdbbac; box-sizing: border-box; }
  .hsep { flex: none; display: block; width: 20px; height: 1px; margin: 2.5px 0; background: #c8c6b6; border-bottom: 1px solid #fff; }

  .cmd {
    height: 55px;
    flex: none;
    display: flex;
    box-sizing: border-box;
    border-top: 2px solid #4a4a44;
    padding-top: 5px;
    box-shadow: inset 0 1px 0 #fff;
  }
  .vgrip { flex: none; width: 5px; height: 42px; margin: 2px 2px 0 8px; border-left: 1px solid #fff; border-right: 1px solid #a9a798; }
  .cmdbox {
    position: relative;
    width: 961px;
    height: 46px;
    flex: none;
    background: #fff;
    border-left: 2px solid #555;
    border-top: 1px solid #555;
    box-sizing: border-box;
    color: #222;
    font: 13.5px/13px "Liberation Mono", "Noto Sans CJK SC", monospace;
    letter-spacing: .55px;
  }
  .hist { height: 29px; border-bottom: 1px solid #999; padding: 1px 0 0 0; overflow: hidden; white-space: nowrap; }
  .input { padding: 2px 0 0 0; }
  .cright { position: absolute; right: 3px; bottom: 1px; width: 14px; height: 13px; background: #c5d4f3; color: #234a8a; font: bold 13px/11px "Liberation Sans", sans-serif; text-align: center; letter-spacing: 0; }
  .cmdscroll { flex: none; width: 15px; display: flex; flex-direction: column; gap: 3px; padding-top: 2px; }
  .csb { width: 15px; height: 12px; background: #c5d4f3; border: 1px solid #e6edfb; box-sizing: border-box; display: flex; align-items: center; justify-content: center; }
  .csb:first-child .chev { transform: rotate(180deg); }

  .status { height: 24px; flex: none; display: flex; align-items: center; box-sizing: border-box; padding: 3px 0 0 7px; position: relative; border-top: 1px solid #fbfaf4; }
  .tip { width: 76px; flex: none; font-size: 11.5px; color: #333; white-space: nowrap; }
  .coords { width: 243px; flex: none; height: 18px; border: 1px solid #d3d1c1; box-sizing: border-box; padding-left: 1px; color: #444; font: 10.5px/16px "Liberation Sans", sans-serif; letter-spacing: .35px; white-space: nowrap; }
  .modes { display: flex; margin-left: 6px; align-items: center; }
  .mode { flex: none; padding: 0 1.5px; font-size: 12px; line-height: 18px; color: #444; margin-right: 3.4px; height: 18px; }
  .mode.on { font-size: 12.5px; border-top: 2px solid #666; border-left: 2px solid #666; background: #f4f2e6; color: #333; line-height: 17px; margin-right: 1px; box-sizing: border-box; height: 19px; }
  .tray { margin-left: auto; width: 71px; height: 16px; background: #2a60d6; margin-right: 44px; align-self: flex-end; flex: none; }
  .tray svg { display: block; }
  .warn { flex: none; width: 20px; height: 20px; margin-right: 8px; }
  .caret { flex: none; width: 14px; font-size: 12px; color: #222; }

  .taskbar { height: 3px; flex: none; background: #2a62d2; }
  .start { display: block; width: 92px; height: 3px; background: #44a04c; }

  .textwin {
    position: absolute;
    left: 77px; top: 266px;
    width: 557px; height: 52px;
    box-sizing: border-box;
    background: #ece9d8;
    border: 1px solid #fff;
    border-right-color: #77766c;
    border-bottom-color: #77766c;
    padding: 3px;
  }
  .tw-title { height: 17px; background: #0a50d6; color: #fff; font: bold 12px/17px "Noto Sans CJK SC", sans-serif; padding-left: 2px; }
  .tw-body { display: flex; align-items: center; margin-top: 3px; height: 19px; }
  .white { height: 19px; background: #fff; border: 1px solid #9db2d3; color: #222; font: 10.5px/17px "Liberation Mono", monospace; }
  .tw1 { width: 107px; } .tw2 { width: 144px; margin-left: 2px; } .tw3 { width: 62px; margin-left: 2px; }
  .tw4 { width: 35px; margin-left: 8px; }
  .ctext:has(.fonticon) { gap: 4px; }
  .fonticon { width: 14px; height: 14px; }
  .bigswatch { display: block; width: 11px; height: 12px; background: #00e000; border: 1px solid #333; margin-left: 1px; }
  .fmt { flex: none; width: 23px; text-align: center; color: #b3b2a6; font: bold 14px/1 "Liberation Serif", serif; }
  .ital { font-style: italic; font-weight: 400; }
  .under { color: #222; text-decoration: underline; font-family: "Liberation Sans", sans-serif; }
  .small { font-size: 13px; width: 25px; font-weight: 400; }
  .frac { font: 8px/8px "Liberation Sans", sans-serif; width: 19px; }
  .ok { flex: none; margin-left: 16px; font-size: 12.5px; color: #222; }

  .rulerwin { position: absolute; left: 270px; top: 355px; width: 162px; }
  .rulerbar {
    height: 28px;
    background: #ece9d8;
    box-sizing: border-box;
    border-top: 1px solid #fff;
    border-bottom: 1px solid #888;
    display: flex;
    align-items: center;
    padding-left: 2px;
  }
  .hglass { width: 12px; height: 24px; flex: none; }
  .ruler {
    width: 124px; height: 15px;
    margin-left: -1px;
    background: #fff;
    border: 1px solid #333;
    border-width: 1px 2px 2px 1px;
    box-sizing: border-box;
    display: flex;
    align-items: center;
    justify-content: space-around;
    padding: 0 6px;
  }
  .ruler i { width: 1px; height: 2px; background: #555; }
  .ruler i.big { height: 7px; background: #222; }
  .editbox {
    margin-left: 5px;
    width: 153px;
    height: 71px;
    box-sizing: border-box;
    border: 2px solid #9a9a9a;
    border-top: 0;
    color: #178a17;
    font: 15px/1 "Liberation Mono", monospace;
    letter-spacing: 1.5px;
    padding: 2px 0 0 2px;
  }

  .arrows { position: absolute; left: 0; top: 0; pointer-events: none; }

  .logo {
    position: absolute;
    left: 765px; top: 621px;
    width: 180px; height: 85px;
    background: #1f2d55;
    display: flex;
    align-items: center;
    box-sizing: border-box;
    padding-left: 15px;
  }
  .logomark { flex: none; }
  .logotext { margin-left: 11px; }
  .cn { color: #d9dce4; font: 500 24px/1 "Noto Sans CJK SC", sans-serif; letter-spacing: 2.6px; white-space: nowrap; }
  .en { color: #99a1b6; font: 9.5px/1 "Liberation Sans", sans-serif; letter-spacing: 1.1px; margin-top: 5px; white-space: nowrap; }
</style>
